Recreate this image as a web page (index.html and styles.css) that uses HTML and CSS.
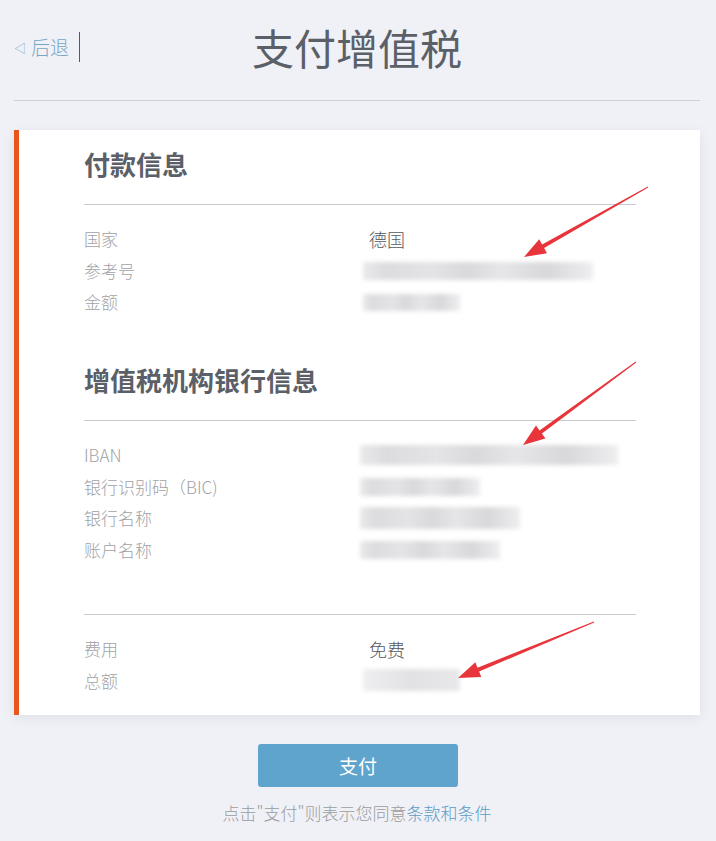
FILE: index.html
```html
<!DOCTYPE html>
<html lang="zh-CN">
<head>
<meta charset="utf-8">
<title>支付增值税</title>
<link rel="stylesheet" href="styles.css">
</head>
<body>
<div class="page">
  <header class="header">
    <a class="back" href="#"><span class="back-tri">◁</span><span class="back-text">后退</span></a>
    <span class="back-sep"></span>
    <h1 class="title">支付增值税</h1>
  </header>
  <hr class="rule">
  <section class="card">
    <h2 class="card-h">付款信息</h2>
    <div class="line"></div>
    <div class="rows">
      <div class="label">国家</div><div class="value"><span class="vtext">德国</span></div>
      <div class="label">参考号</div><div class="value"><span class="blur b-ref"></span></div>
      <div class="label">金额</div><div class="value"><span class="blur b-amt"></span></div>
    </div>
    <h2 class="card-h h2">增值税机构银行信息</h2>
    <div class="line"></div>
    <div class="rows">
      <div class="label">IBAN</div><div class="value"><span class="blur b-iban"></span></div>
      <div class="label">银行识别码（BIC)</div><div class="value"><span class="blur b-bic"></span></div>
      <div class="label">银行名称</div><div class="value"><span class="blur b-bank"></span></div>
      <div class="label">账户名称</div><div class="value"><span class="blur b-acct"></span></div>
    </div>
    <div class="line l3"></div>
    <div class="rows">
      <div class="label">费用</div><div class="value"><span class="vtext">免费</span></div>
      <div class="label">总额</div><div class="value"><span class="blur b-tot"></span></div>
    </div>
  </section>
  <div class="actions">
    <button class="pay">支付</button>
    <p class="terms">点击"支付"则表示您同意<a class="terms-link" href="#">条款和条件</a></p>
  </div>
  <svg class="arrows" width="716" height="841" viewBox="0 0 716 841">
    <polygon points="648.2,187.4 544.1,247.9 547.0,253.2 524,257 539.2,239.2 542.1,244.5 647.8,186.6"/>
    <polygon points="636.3,362.4 541.9,433.6 545.4,438.4 523,445 536.0,425.6 539.5,430.4 635.7,361.6"/>
    <polygon points="594.2,622.5 479.1,671.5 481.3,677.0 458,678 475.3,662.2 477.5,667.7 593.8,621.5"/>
  </svg>
</div>
</body>
</html>
```

FILE: styles.css
```css
* { box-sizing: border-box; }
html, body {
  margin: 0;
  padding: 0;
  background: #f0f1f6;
  font-family: "Noto Sans CJK SC", "Noto Sans", sans-serif;
}
.page {
  position: relative;
  width: 716px;
  min-height: 841px;
  padding: 0 16px 0 14px;
}
.header {
  position: relative;
  height: 100px;
  display: flex;
  align-items: center;
  padding-bottom: 6px;
}
.back {
  display: flex;
  align-items: center;
  text-decoration: none;
  color: #76a6c6;
}
.back-tri {
  font-size: 12px;
  margin-right: 5px;
  color: #7aaac8;
}
.back-text {
  font-size: 19px;
  line-height: 24px;
  font-weight: 300;
}
.back-sep {
  width: 1px;
  height: 30px;
  background: #555a60;
  margin-left: 10px;
}
.title {
  position: absolute;
  left: 0;
  right: 0;
  top: 20px;
  margin: 0;
  text-align: center;
  font-size: 42px;
  line-height: 54px;
  font-weight: 400;
  color: #5b6068;
  pointer-events: none;
}
.rule {
  margin: 0;
  border: 0;
  height: 1px;
  background: #cfd0d4;
}
.card {
  margin-top: 29px;
  background: #fff;
  border-left: 5px solid #e8561c;
  box-shadow: 0 3px 12px rgba(0, 0, 0, 0.07);
  padding: 16px 64px 19px 65px;
}
.card-h {
  margin: 0;
  font-size: 26px;
  line-height: 36px;
  font-weight: 700;
  color: #5b6068;
}
.card-h.h2 { margin-top: 44px; }
.line {
  height: 1px;
  background: #c9cacd;
  margin-top: 22px;
}
.line.l3 { margin-top: 48px; }
.rows {
  display: grid;
  grid-template-columns: 279px 1fr;
  grid-auto-rows: 31.7px;
  margin-top: 18px;
  align-items: center;
}
.label {
  font-size: 17px;
  font-weight: 300;
  color: #a0a2a6;
  line-height: 31.7px;
}
.value {
  display: flex;
  align-items: center;
  height: 31.7px;
}
.vtext {
  margin-left: 6px;
  font-size: 18px;
  font-weight: 300;
  color: #55585d;
}
.blur {
  display: block;
  height: 18px;
  background: linear-gradient(90deg, #e9e9eb 0%, #dcdcde 10%, #e4e4e6 30%, #d9d9db 45%, #e6e6e8 60%, #d8d8da 80%, #eeeef0 100%);
  filter: blur(2px);
}
.b-ref { width: 230px; }
.b-amt { width: 97px; height: 17px; }
.b-iban { width: 258px; height: 20px; margin-left: -3px; }
.b-bic { width: 120px; margin-left: -3px; }
.b-bank { width: 160px; height: 22px; margin-left: -3px; }
.b-acct { width: 140px; margin-left: -3px; }
.b-tot { width: 97px; height: 22px; background: linear-gradient(90deg, #eeeef0, #e2e2e4 50%, #e8e8ea); }
.actions {
  display: flex;
  flex-direction: column;
  align-items: center;
  margin-top: 29px;
}
.pay {
  width: 200px;
  height: 43px;
  border: 0;
  border-radius: 3px;
  background: #5ea4cd;
  color: #fff;
  font-family: inherit;
  font-size: 19px;
  margin-left: 2px;
}
.terms {
  margin: 14px 0 0;
  font-size: 17px;
  line-height: 24px;
  font-weight: 300;
  color: #9a9ca0;
}
.terms-link {
  color: #5d9cc6;
  text-decoration: none;
}
.arrows {
  position: absolute;
  left: 0;
  top: 0;
  pointer-events: none;
}
.arrows polygon { fill: #e8353c; }
```
